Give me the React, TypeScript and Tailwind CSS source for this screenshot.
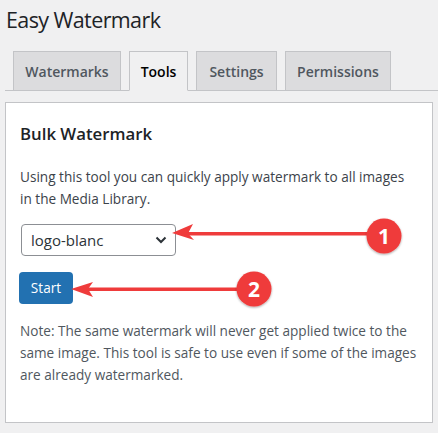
import React from 'react';

const tabs = [
  { label: 'Watermarks', width: 'w-[108px]', active: false },
  { label: 'Tools', width: 'w-[59px]', active: true },
  { label: 'Settings', width: 'w-[81px]', active: false },
  { label: 'Permissions', width: 'w-[106px]', active: false }
];

const Annotations: React.FC = () => (
  <svg
    className="pointer-events-none absolute left-0 top-0"
    width={438}
    height={433}
    viewBox="0 0 438 433"
  >
    <defs>
      <filter id="shadow" x="-30%" y="-30%" width="160%" height="160%">
        <feDropShadow dx="0" dy="1" stdDeviation="1" floodColor="#000" floodOpacity="0.35" />
      </filter>
    </defs>
    <g fill="#ef3b3b" stroke="none">
      {/* arrow 1 */}
      <rect x={188} y={232} width={180} height={3.5} />
      <polygon points="172,233 193,224 188,233.5 194,240" />
      {/* arrow 2 */}
      <rect x={88} y={287.5} width={152} height={3.5} />
      <polygon points="71,289 93,282 88,289 93,297" />
    </g>
    <g filter="url(#shadow)">
      <circle cx={384} cy={236} r={17.5} fill="#ef3b3b" />
      <circle cx={254} cy={289} r={17.5} fill="#ef3b3b" />
    </g>
    <g fill="#fff" fontFamily="'Open Sans', sans-serif" fontWeight={700} fontSize={21} textAnchor="middle">
      <text x={384} y={243.5}>1</text>
      <text x={254} y={296.5}>2</text>
    </g>
  </svg>
);

const App: React.FC = () => {
  return (
    <div className="relative h-[433px] w-[438px] overflow-hidden bg-[#f0f0f1] font-['Open_Sans',sans-serif]">
      <h1 className="h-[51px] pl-[6px] pt-[4px] text-[21.5px] leading-[32px] font-normal tracking-[-0.6px] text-[#1d2327]">
        Easy Watermark
      </h1>

      <div className="ml-[5px] flex h-[40px] items-end gap-[8px] border-b border-[#c3c4c7] pl-[8px]">
        {tabs.map((tab) => (
          <div
            key={tab.label}
            className={
              tab.active
                ? `-mb-px flex h-[40px] ${tab.width} items-center justify-center border border-[#c3c4c7] border-b-[#f0f0f1] bg-[#f0f0f1] text-[14px] font-semibold text-black`
                : `-mb-px flex h-[40px] ${tab.width} items-center justify-center border border-[#c3c4c7] bg-[#dcdcde] text-[14px] font-semibold text-[#50575e]`
            }
          >
            {tab.label}
          </div>
        ))}
      </div>

      <div className="ml-[5px] mt-[11px] h-[321px] w-[428px] border border-[#c3c4c7] bg-white pl-[14px]">
        <h2 className="mt-[19px] text-[16.8px] leading-[24px] font-semibold text-[#1d2327]">
          Bulk Watermark
        </h2>
        <p className="mt-[20px] whitespace-nowrap text-[13.6px] leading-[22px] text-[#3c434a]">
          Using this tool you can quickly apply watermark to all images
          <br />
          in the Media Library.
        </p>
        <div className="ml-[1px] mt-[14px] flex h-[32px] w-[155px] items-center justify-between rounded-[4px] border border-[#8c8f94] bg-white pl-[9px] pr-[8px] text-[15px] text-[#2c3338]">
          <span>logo-blanc</span>
          <svg width="12" height="8" viewBox="0 0 12 8" fill="none">
            <path d="M1.5 1.5 L6 6 L10.5 1.5" stroke="#2c3338" strokeWidth="2" />
          </svg>
        </div>
        <button className="-ml-px mt-[16px] flex h-[32px] w-[54px] items-center justify-center rounded-[4px] bg-[#2271b1] text-[13.6px] text-white">
          Start
        </button>
        <p className="mt-[16px] whitespace-nowrap text-[13.6px] leading-[22px] text-[#50575e]">
          Note: The same watermark will never get applied twice to the
          <br />
          same image. This tool is safe to use even if some of the images
          <br />
          are already watermarked.
        </p>
      </div>

      <Annotations />
    </div>
  );
};

export default App;
